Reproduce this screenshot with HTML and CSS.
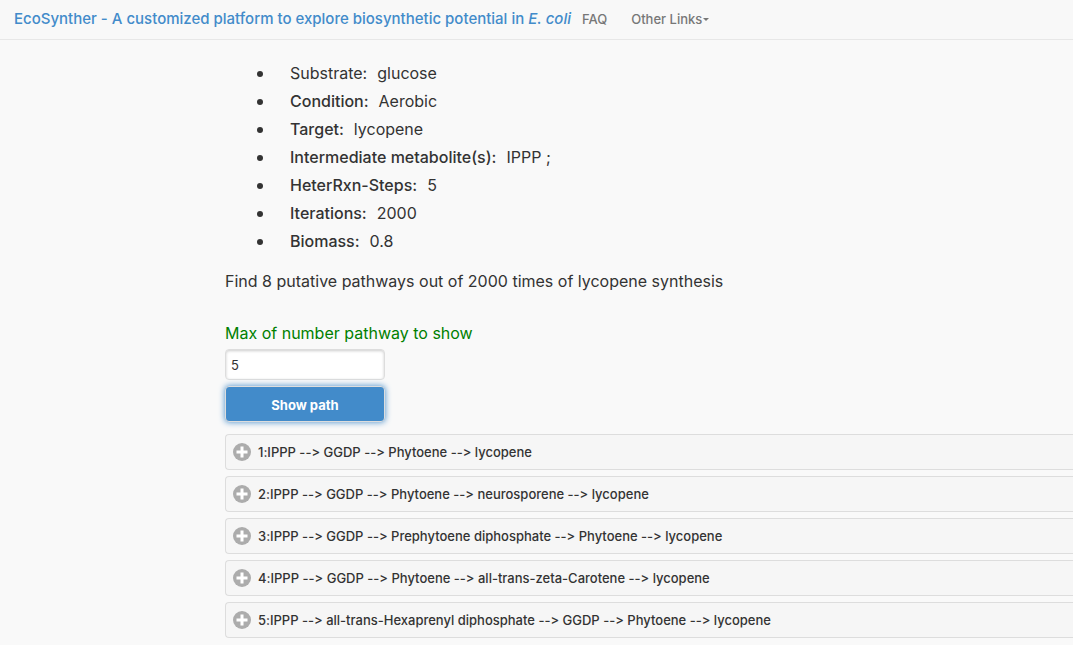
FILE: index.html
```html
<!DOCTYPE html>
<html lang="en">
<head>
<meta charset="utf-8">
<meta name="viewport" content="width=device-width, initial-scale=1">
<title>EcoSynther</title>
<link rel="stylesheet" href="styles.css">
</head>
<body>
<svg class="defs" aria-hidden="true">
  <symbol id="plus" viewBox="0 0 18 18">
    <circle cx="9" cy="9" r="9" fill="#acacac"/>
    <path d="M9 3.5v11M3.5 9h11" stroke="#fff" stroke-width="3" fill="none"/>
  </symbol>
</svg>
<nav class="navbar">
  <a class="brand" href="#">EcoSynther - A customized platform to explore biosynthetic potential in <i>E. coli</i></a>
  <div class="nav-links">
    <a class="nav-link" href="#">FAQ</a>
    <a class="nav-link" href="#">Other Links<span class="caret"></span></a>
  </div>
</nav>
<main class="content">
  <ul class="params">
    <li>Substrate:<span class="value">glucose</span></li>
    <li><b>Condition:</b><span class="value">Aerobic</span></li>
    <li><b>Target:</b><span class="value">lycopene</span></li>
    <li><b>Intermediate metabolite(s):</b><span class="value">IPPP ;</span></li>
    <li><b>HeterRxn-Steps:</b><span class="value">5</span></li>
    <li><b>Iterations:</b><span class="value">2000</span></li>
    <li><b>Biomass:</b><span class="value">0.8</span></li>
  </ul>
  <p class="summary">Find 8 putative pathways out of 2000 times of lycopene synthesis</p>
  <form class="path-form">
    <label class="path-label" for="max">Max of number pathway to show</label>
    <input class="path-input" id="max" type="text" value="5">
    <button class="path-button" type="button">Show path</button>
  </form>
  <div class="results">
    <button class="result" type="button"><svg class="icon" aria-hidden="true"><use href="#plus"/></svg><span>1:IPPP --&gt; GGDP --&gt; Phytoene --&gt; lycopene</span></button>
    <button class="result" type="button"><svg class="icon" aria-hidden="true"><use href="#plus"/></svg><span>2:IPPP --&gt; GGDP --&gt; Phytoene --&gt; neurosporene --&gt; lycopene</span></button>
    <button class="result" type="button"><svg class="icon" aria-hidden="true"><use href="#plus"/></svg><span>3:IPPP --&gt; GGDP --&gt; Prephytoene diphosphate --&gt; Phytoene --&gt; lycopene</span></button>
    <button class="result" type="button"><svg class="icon" aria-hidden="true"><use href="#plus"/></svg><span>4:IPPP --&gt; GGDP --&gt; Phytoene --&gt; all-trans-zeta-Carotene --&gt; lycopene</span></button>
    <button class="result" type="button"><svg class="icon" aria-hidden="true"><use href="#plus"/></svg><span>5:IPPP --&gt; all-trans-Hexaprenyl diphosphate --&gt; GGDP --&gt; Phytoene --&gt; lycopene</span></button>
  </div>
</main>
</body>
</html>
```
FILE: styles.css
```css
* { box-sizing: border-box; }
body {
  margin: 0;
  background: #f9f9f9;
  color: #333;
  font: 16px/28px Inter, "Liberation Sans", sans-serif;
  font-feature-settings: "calt" 0;
}
.defs { display: none; }
.navbar {
  display: flex;
  align-items: center;
  gap: 11px;
  height: 40px;
  padding: 0 14px 1px;
  background: #f8f8f8;
  border-bottom: 1px solid #e7e7e7;
  white-space: nowrap;
}
.brand { color: #428bca; font-size: 15px; font-weight: 500; text-decoration: none; }
.nav-links { display: flex; gap: 24px; }
.nav-link {
  display: flex;
  align-items: center;
  color: #777;
  font-size: 13px;
  font-weight: 500;
  text-decoration: none;
}
.caret {
  margin-left: 1px;
  border: 3px solid transparent;
  border-top-color: #777;
  border-bottom: 0;
}
.content { padding: 19px 0 6px 225px; }
.params { margin: 0; padding-left: 65px; }
.params li { padding: 0; list-style: none; position: relative; }
.params li::before {
  content: "";
  position: absolute;
  left: -33px;
  top: 12px;
  width: 6px;
  height: 6px;
  border-radius: 50%;
  background: #333;
}
.params b { font-weight: 500; }
.value { margin-left: 10px; }
.summary { margin: 12px 0 24px; }
.path-form {
  display: flex;
  flex-direction: column;
  align-items: flex-start;
}
.path-label { color: #008000; }
.path-input {
  width: 160px;
  height: 31px;
  margin-top: 2px;
  padding: 0 5px;
  border: 1px solid #ddd;
  border-radius: 4px;
  background: #fff;
  box-shadow: inset 0 1px 3px rgba(0, 0, 0, .2);
  color: #333;
  font: 13px/20px Inter, "Liberation Sans", sans-serif;
}
.path-button {
  width: 160px;
  height: 36px;
  margin-top: 6px;
  padding: 2px 0 0;
  border: 1px solid #ddd;
  border-radius: 4px;
  background: #428bca;
  box-shadow: 0 0 6px #428bca;
  color: #fff;
  font: 700 13px/20px Inter, "Liberation Sans", sans-serif;
}
.results {
  display: flex;
  flex-direction: column;
  gap: 6px;
  margin-top: 12px;
}
.result {
  display: flex;
  align-items: center;
  gap: 7px;
  min-height: 36px;
  padding: 0 7px;
  border: 1px solid #ddd;
  border-right: 0;
  border-radius: 4px 0 0 4px;
  background: #f6f6f6;
  color: #333;
  font: 500 13px/20px Inter, "Liberation Sans", sans-serif;
  font-feature-settings: "calt" 0;
  text-align: left;
}
.icon { flex: none; width: 18px; height: 18px; }
```
